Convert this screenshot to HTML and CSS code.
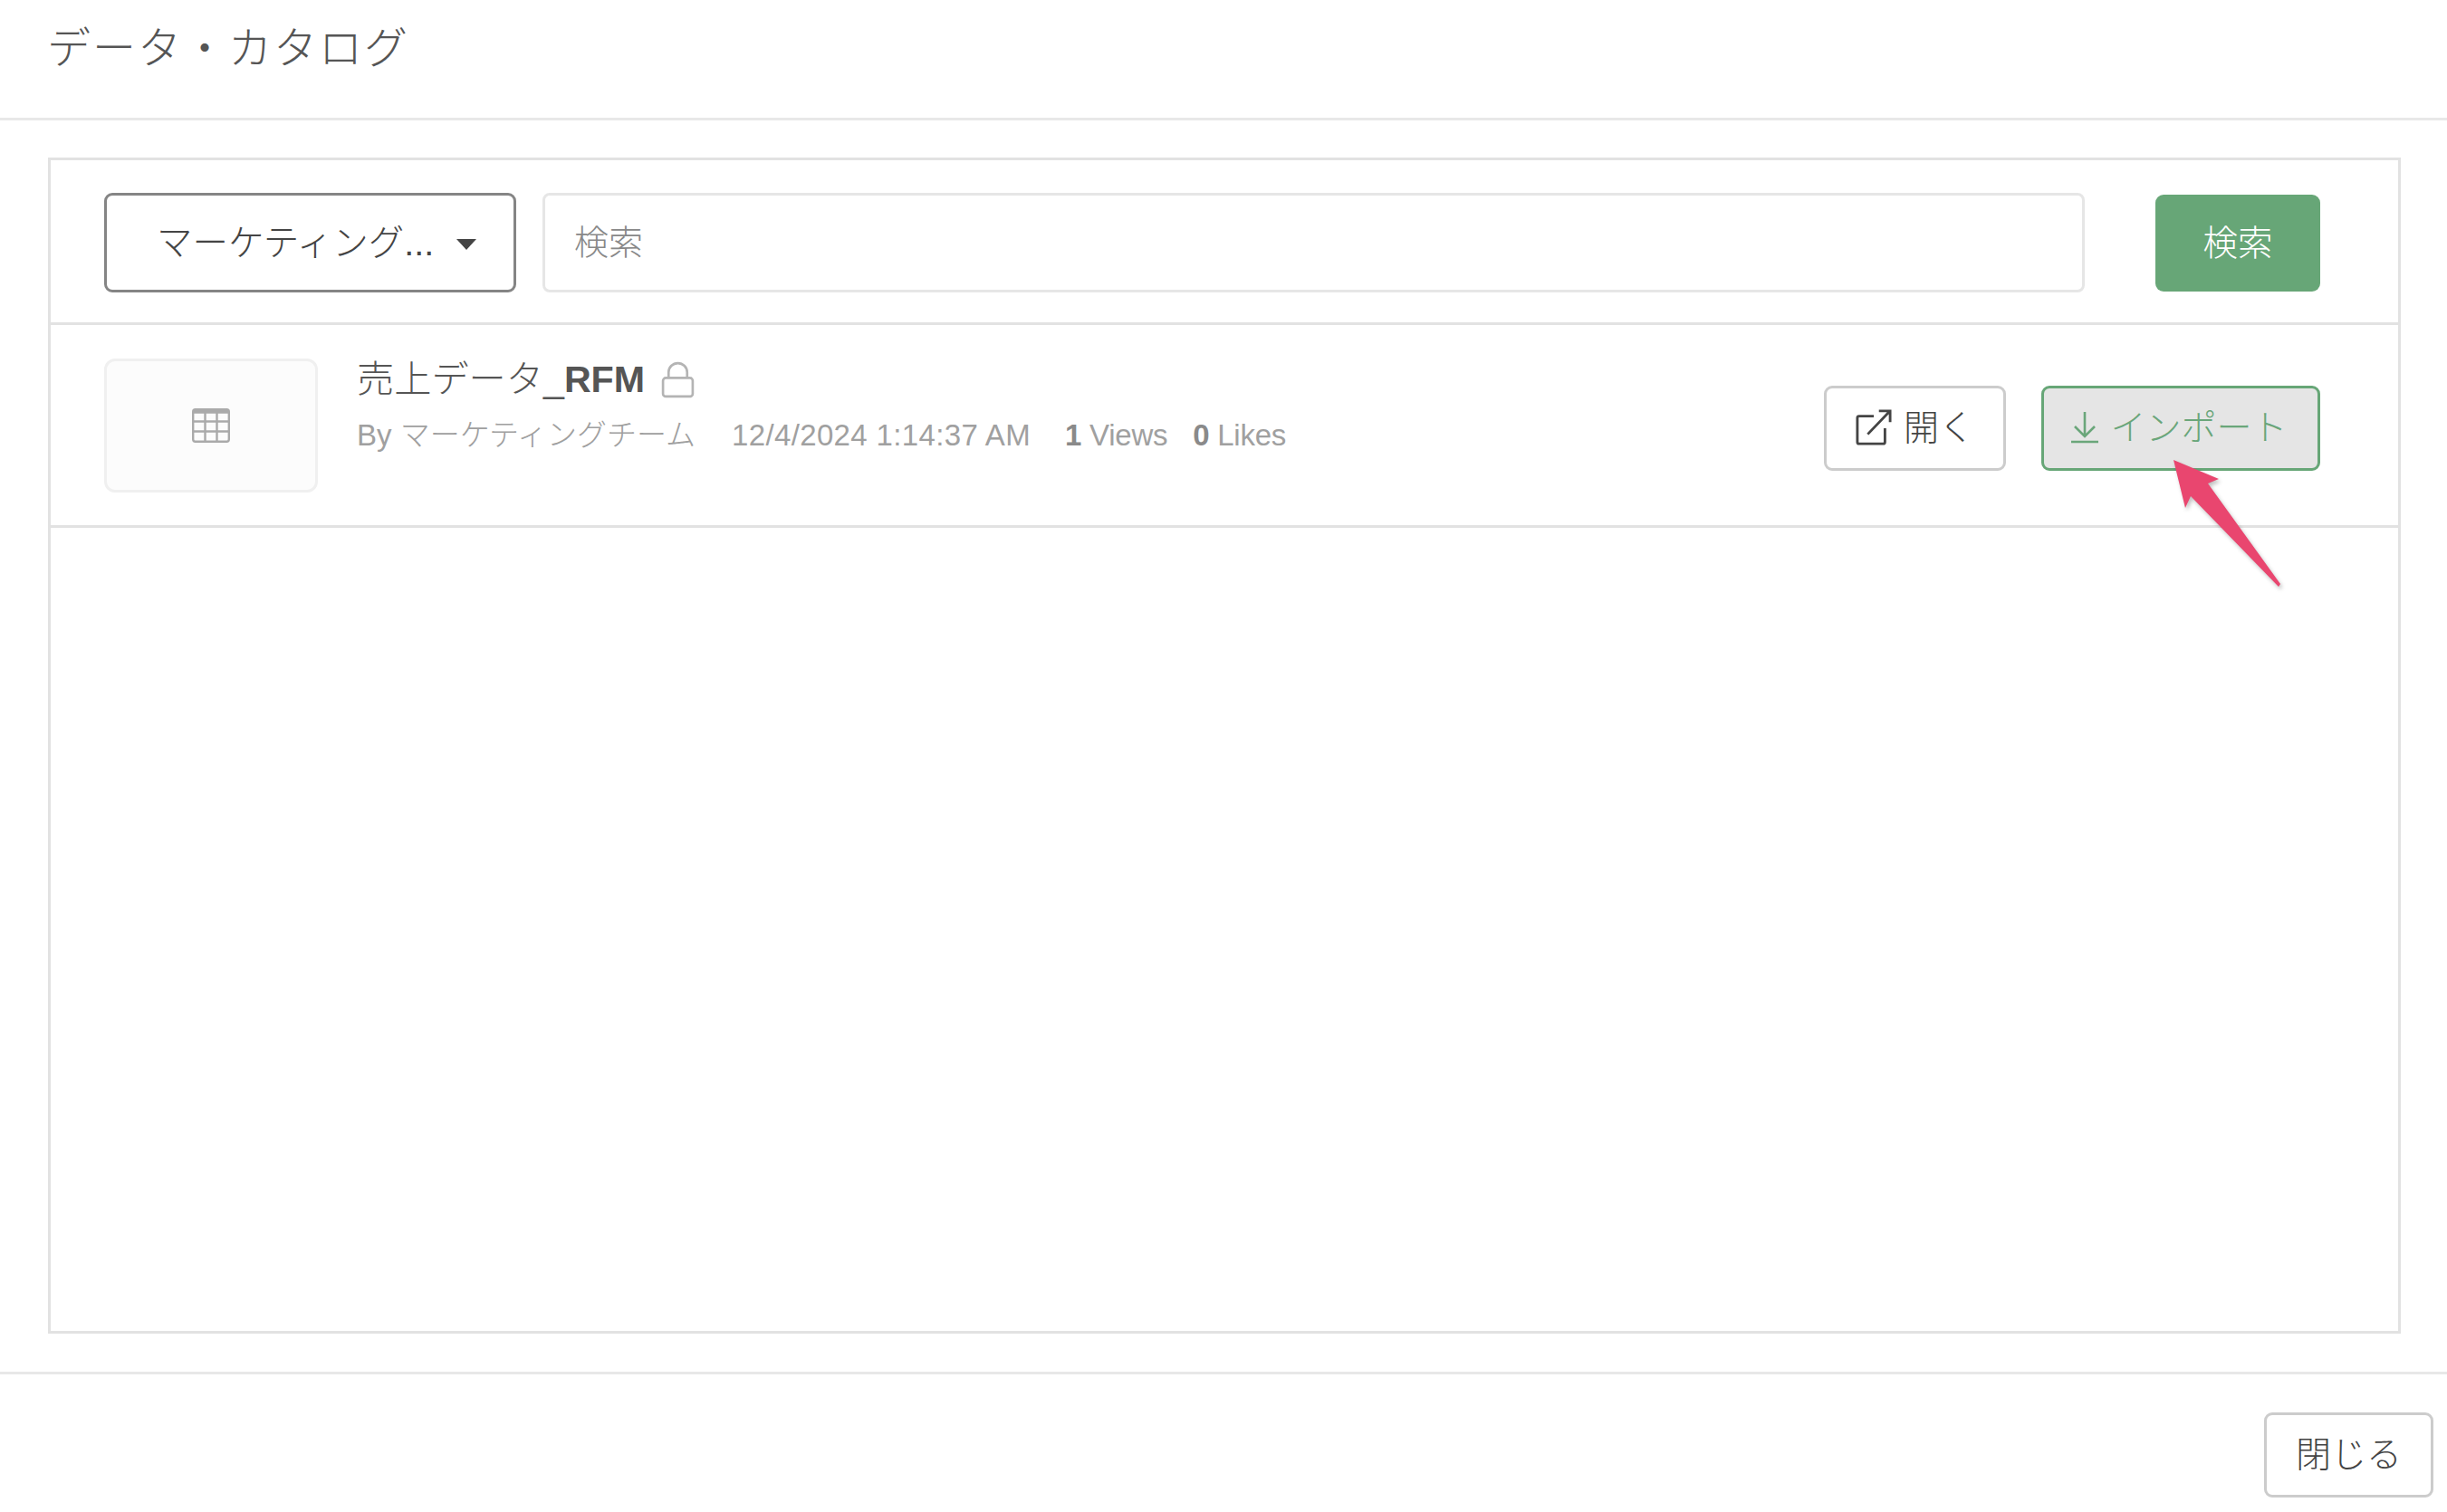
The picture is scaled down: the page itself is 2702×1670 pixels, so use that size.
FILE: index.html
```html
<!DOCTYPE html>
<html lang="ja">
<head>
<meta charset="utf-8">
<title>データ・カタログ</title>
<link rel="stylesheet" href="styles.css">
</head>
<body>
<div class="page">
  <header class="head"><h1 class="title">データ・カタログ</h1></header>
  <main class="body">
    <section class="panel">
      <div class="toolbar">
        <button class="dropdown"><span>マーケティング...</span><i class="caret"></i></button>
        <div class="input">検索</div>
        <button class="search">検索</button>
      </div>
      <div class="row">
        <div class="thumb">
          <svg class="tbl" viewBox="0 0 42 38" width="42" height="38" fill="none" stroke="#aaa" stroke-width="2.4">
            <rect x="1.2" y="1.2" width="39.6" height="35.6" rx="2.5"/>
            <path d="M1 3.5h40" stroke-width="4.5"/>
            <path d="M14.5 2v35M27.5 2v35M1 14.5h40M1 25.5h40"/>
          </svg>
        </div>
        <div class="info">
          <div class="name"><span>売上データ</span><span class="latin">_</span><b class="latin">RFM</b>
            <svg class="lock" viewBox="0 0 36 40" width="37" height="41" fill="none" stroke="#b4b4b4" stroke-width="2.6">
              <rect x="2" y="18" width="32" height="20" rx="3"/>
              <path d="M8 18v-6a10 10 0 0 1 20 0v6"/>
            </svg>
          </div>
          <div class="meta"><span class="by">By マーケティングチーム</span><span class="date">12/4/2024 1:14:37 AM</span><span class="count"><b>1</b> Views</span><span class="count"><b>0</b> Likes</span></div>
        </div>
        <div class="actions">
          <button class="btn open">
            <svg viewBox="0 0 42 42" width="40" height="40" fill="none" stroke="#444" stroke-width="3">
              <path d="M21 8H4a2 2 0 0 0-2 2v28a2 2 0 0 0 2 2h28a2 2 0 0 0 2-2V22"/>
              <path d="M14 29 39 3M27 2h13v13"/>
            </svg>
            <span>開く</span>
          </button>
          <button class="btn import">
            <svg viewBox="0 0 30 36" width="30" height="36" fill="none" stroke="#6aa67a" stroke-width="2.6">
              <path d="M15 1v26M4 17l11 11 11-11M0 34h30"/>
            </svg>
            <span>インポート</span>
          </button>
        </div>
      </div>
    </section>
  </main>
  <footer class="foot"><button class="btn close">閉じる</button></footer>
  <svg class="arrow" viewBox="0 0 2702 1670" width="2702" height="1670">
    <path d="M2400 508 L2450 529 L2438 534 L2518 645 L2516 648 L2419 548 L2413 561 Z" fill="#e9466f"/>
  </svg>
</div>
</body>
</html>
```
FILE: styles.css
```css
* { box-sizing: border-box; }
html, body { margin: 0; padding: 0; background: #fff; }
body { font-family: "Liberation Sans", "Noto Sans CJK JP", sans-serif; color: #555; }
.page { position: relative; width: 2702px; height: 1670px; overflow: hidden; }
button { font-family: inherit; margin: 0; }
.head { height: 133px; border-bottom: 3px solid #e8e8e8; padding: 23px 0 0 52px; }
.title { margin: 0; font-size: 48px; line-height: 62px; font-weight: 300; color: #555; letter-spacing: 2px; }
.body { padding: 41px 51px 42px 53px; }
.panel { height: 1299px; border: 3px solid #e2e2e2; }
.toolbar { height: 182px; border-bottom: 3px solid #e2e2e2; padding: 36px 86px 0 59px; display: flex; align-items: flex-start; }
.dropdown { width: 455px; height: 110px; background: #fff; border: 3px solid #858585; border-radius: 9px; display: flex; align-items: center; padding: 0 41px 7px 55px; justify-content: space-between; font-size: 39.5px; color: #444; font-weight: 300; }
.caret { width: 0; height: 0; border-left: 11px solid transparent; border-right: 11px solid transparent; border-top: 12px solid #444; margin-top: 11px; }
.input { width: 1703px; height: 110px; margin-left: 29px; border: 3px solid #e6e6e6; border-radius: 8px; padding-left: 32px; line-height: 104px; font-size: 38px; color: #888; font-weight: 300; }
.search { width: 182px; height: 107px; margin: 2px 0 0 78px; padding: 0 0 7px; background: #67a677; border: none; border-radius: 9px; color: #fff; font-size: 38.5px; font-weight: 300; }
.row { height: 224px; border-bottom: 3px solid #e2e2e2; padding: 37px 86px 0 59px; display: flex; align-items: flex-start; }
.thumb { width: 236px; height: 148px; background: #fcfcfc; border: 3px solid #f0f0f0; border-radius: 12px; display: flex; align-items: center; justify-content: center; }
.info { margin-left: 43px; flex: 1; }
.name { display: flex; align-items: center; height: 46px; font-size: 41.2px; line-height: 46px; font-weight: 300; color: #555; }
.name .latin { font-weight: 400; }
.name b.latin { font-weight: 700; }
.name .lock { margin-left: 18px; }
.meta { margin-top: 18px; font-size: 33px; line-height: 42px; color: #a0a0a0; font-weight: 300; white-space: nowrap; display: flex; }
.meta b { color: #8a8a8a; font-weight: 700; }
.date { margin-left: 40px; letter-spacing: .35px; }
.count { margin-left: 38px; letter-spacing: -.25px; }
.count + .count { margin-left: 28px; }
.actions { display: flex; gap: 39px; padding-top: 30px; }
.btn { height: 94px; padding: 0 0 9px; display: flex; align-items: center; justify-content: center; background: #fff; border: 3px solid #ccc; border-radius: 9px; font-size: 39px; color: #444; font-weight: 300; }
.btn svg { position: relative; top: 3px; }
.open { width: 201px; gap: 13px; }
.import { width: 308px; gap: 13px; padding-right: 3px; background: #e5e5e5; border-color: #67a677; color: #6aa67a; }
.foot { border-top: 3px solid #e8e8e8; padding: 42px 15px 0 0; display: flex; justify-content: flex-end; }
.close { width: 187px; }
.arrow { position: absolute; left: 0; top: 0; pointer-events: none; filter: drop-shadow(2px 3px 2px rgba(0,0,0,.25)); }
```
